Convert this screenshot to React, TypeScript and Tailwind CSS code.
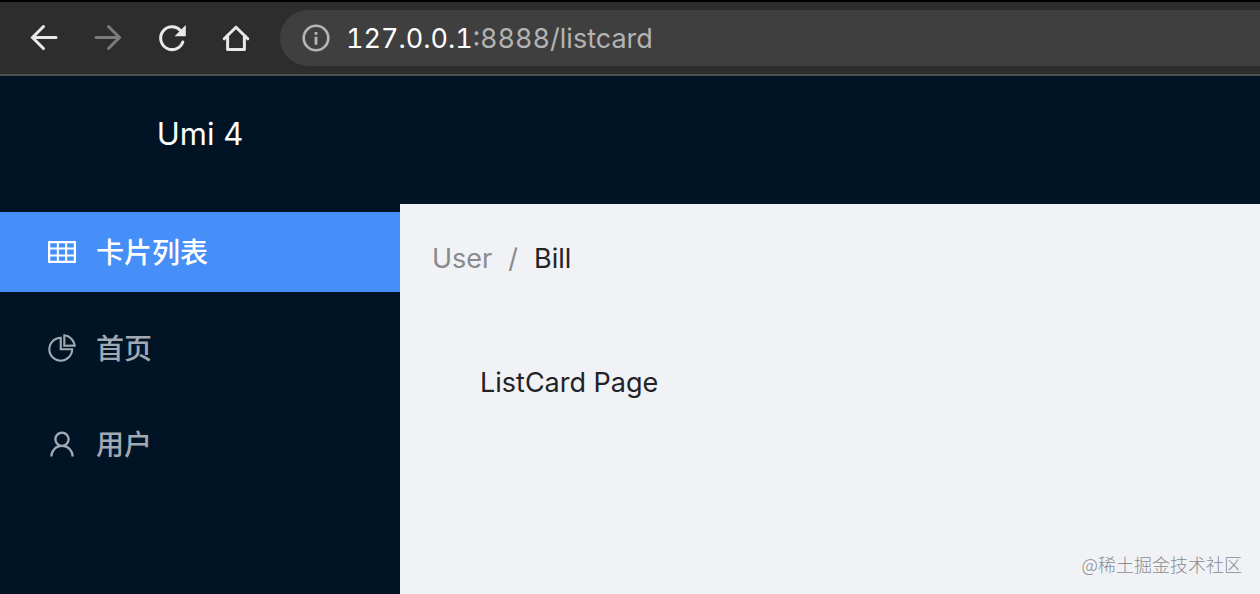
import type { ReactNode } from 'react';
import { AiOutlinePieChart, AiOutlineTable, AiOutlineUser } from 'react-icons/ai';
import type { IconType } from 'react-icons';

type MenuItem = { label: string; href: string; icon: IconType; active?: boolean };

const menu: MenuItem[] = [
  { label: '卡片列表', href: '#/listcard', icon: AiOutlineTable, active: true },
  { label: '首页', href: '#/home', icon: AiOutlinePieChart },
  { label: '用户', href: '#/user', icon: AiOutlineUser },
];

function NavButton({ label, disabled, children }: { label: string; disabled?: boolean; children: ReactNode }) {
  return (
    <button type="button" aria-label={label} disabled={disabled} className="size-8 shrink-0 text-[#e9e9e9] disabled:text-[#7b7b7b]">
      <svg viewBox="0 0 32 32" className="size-8" fill="none" stroke="currentColor" strokeWidth="3" aria-hidden="true">
        {children}
      </svg>
    </button>
  );
}

function BrowserBar() {
  return (
    <div className="flex h-[76px] items-center gap-8 border-t-2 border-b-2 border-t-black border-b-[#4d5052] bg-[#2d2d2d] pl-7">
      <NavButton label="Back">
        <path d="M28 15.5H5M15.5 4.5L4.5 15.5L15.5 26.5" strokeLinejoin="miter" strokeLinecap="round" />
      </NavButton>
      <NavButton label="Forward" disabled>
        <path d="M4 15.5H27M16.5 4.5L27.5 15.5L16.5 26.5" strokeLinejoin="miter" strokeLinecap="round" />
      </NavButton>
      <NavButton label="Reload">
        <path d="M26.8 20A11.4 11.4 0 1 1 24.3 8.3" strokeLinecap="round" />
        <path d="M29.8 3V14.2H18.6Z" fill="currentColor" stroke="none" />
      </NavButton>
      <NavButton label="Home">
        <path d="M4.2 16.8L16 5.2L27.8 16.8M7.6 14.5V27.5H24.4V14.5" strokeLinejoin="round" strokeLinecap="round" />
      </NavButton>
      <div className="-ml-1 flex h-14 min-w-0 flex-1 items-center gap-4 rounded-l-full bg-[#3f3f3f] pl-[22px]">
        <svg viewBox="0 0 28 28" className="size-7 shrink-0 text-[#b5b6b8]" fill="none" stroke="currentColor" strokeWidth="2.6" aria-hidden="true">
          <circle cx="14" cy="14" r="12.3" />
          <path d="M14 12.7V20.7M14 8V10.8" strokeWidth="2.8" />
        </svg>
        <div className="truncate pt-0.5 text-[27px] leading-9 tabular-nums text-[#b3b3b3]">
          <span className="text-white">127.0.0.1</span>:8888/listcard
        </div>
      </div>
    </div>
  );
}

export default function App() {
  return (
    <div className="flex min-h-screen flex-col bg-[#011426] font-['Inter','Noto_Sans_CJK_SC',sans-serif]">
      <BrowserBar />
      <header className="flex h-32 items-start">
        <h1 className="w-100 pt-9 text-center text-[31px] leading-11 text-white">Umi 4</h1>
      </header>
      <div className="flex flex-1">
        <nav className="w-100 shrink-0 pt-2">
          <ul className="flex flex-col gap-4">
            {menu.map(({ label, href, icon: Icon, active }) => (
              <li key={href}>
                <a
                  href={href}
                  className={`flex h-20 items-center gap-5 pl-12 text-[28px] leading-10 font-medium ${active ? 'bg-[#468ef8] text-white' : 'text-[#a1a9b3]'}`}
                >
                  <Icon viewBox="64 64 896 896" className="size-7 shrink-0" aria-hidden="true" />
                  <span className="pt-0.5">{label}</span>
                </a>
              </li>
            ))}
          </ul>
        </nav>
        <main className="flex flex-1 flex-col bg-[#f0f2f6] px-8 pt-[33px] text-[27px] leading-11 text-[#222326]">
          <nav aria-label="Breadcrumb">
            <ol className="flex gap-4 text-[#898a8d]">
              <li><a href="#/user">User</a></li>
              <li aria-hidden="true">/</li>
              <li aria-current="page" className="text-[#222326]">Bill</li>
            </ol>
          </nav>
          <p className="px-12 pt-20">ListCard Page</p>
          <small className="-mr-3.5 mt-auto self-end pb-[18px] text-[18px] leading-6 text-[#8b8c8f] font-['Noto_Sans_CJK_SC',sans-serif] font-light">
            @稀土掘金技术社区
          </small>
        </main>
      </div>
    </div>
  );
}
